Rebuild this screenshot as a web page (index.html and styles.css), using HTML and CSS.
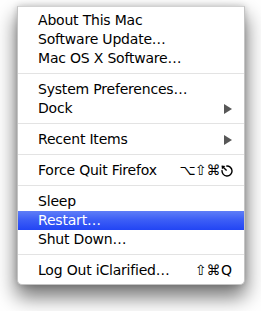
FILE: index.html
```html
<!DOCTYPE html>
<html lang="en">
<head>
  <meta charset="UTF-8" />
  <title>Apple Menu</title>
  <link rel="stylesheet" href="styles.css">
</head>
<body>

  <ul class="menu">
    <li class="item">About This Mac</li>
    <li class="item">Software Update…</li>
    <li class="item">Mac OS X Software…</li>
    <li class="sep"></li>
    <li class="item">System Preferences…</li>
    <li class="item">Dock <span class="arrow"></span></li>
    <li class="sep"></li>
    <li class="item">Recent Items <span class="arrow"></span></li>
    <li class="sep"></li>
    <li class="item">Force Quit Firefox
      <span class="keys">
        <span class="key">⌥</span><span class="key">⇧</span><span class="key">⌘</span><span class="key">
          <svg class="esc" width="12" height="12" viewBox="0 0 12 12">
            <path d="M5.2 1.1 A5 5 0 1 1 1.1 5.2" fill="none" stroke="#000" stroke-width="1.4"/>
            <path d="M1.2 1.2 L5.6 5.6" fill="none" stroke="#000" stroke-width="1.4"/>
            <path d="M0.6 0.6 L4.4 0.9 L0.9 4.4 Z" fill="#000"/>
          </svg>
        </span>
      </span>
    </li>
    <li class="sep"></li>
    <li class="item">Sleep</li>
    <li class="item active">Restart…</li>
    <li class="item">Shut Down…</li>
    <li class="sep"></li>
    <li class="item">Log Out iClarified…
      <span class="keys">
        <span class="key">⇧</span><span class="key">⌘</span><span class="key">Q</span>
      </span>
    </li>
  </ul>

</body>
</html>
```

FILE: styles.css
```css
* {
  box-sizing: border-box;
}
html {
  background: #fff;
}
body {
  margin: 0;
  padding: 6px 0 0 17px;
  min-height: 311px;
  background: #fff;
  font-family: 'DejaVu Sans', sans-serif;
  font-size: 14px;
  color: #000;
}

.menu {
  list-style: none;
  margin: 0;
  padding: 4px 0 4px 0;
  width: 228px;
  background: #fff;
  border: 1px solid #c4c4c4;
  border-top-color: #d2d2d2;
  border-radius: 0 0 5px 5px;
  box-shadow: 0 11px 20px 1px rgba(0, 0, 0, 0.55), 0 0 6px rgba(0, 0, 0, 0.18);
}

.item {
  height: 19px;
  line-height: 19px;
  padding: 0 11px 0 20px;
  display: flex;
  align-items: center;
  justify-content: space-between;
  white-space: nowrap;
  letter-spacing: -0.2px;
}
.item.active {
  color: #fff;
  background: linear-gradient(to bottom, #5f7ef7 0%, #3d5ff6 45%, #2245f4 100%);
}

.sep {
  height: 12px;
  padding-top: 5px;
}
.sep::before {
  content: '';
  display: block;
  height: 1px;
  background: #e3e3e3;
}

.arrow {
  width: 0;
  height: 0;
  margin-right: 1px;
  border-left: 8px solid #575757;
  border-top: 5px solid transparent;
  border-bottom: 5px solid transparent;
}

.keys {
  display: flex;
  align-items: center;
}
.key {
  width: 13px;
  display: flex;
  justify-content: center;
  align-items: center;
  font-size: 14px;
  letter-spacing: 0;
}
.esc {
  display: block;
}
```
